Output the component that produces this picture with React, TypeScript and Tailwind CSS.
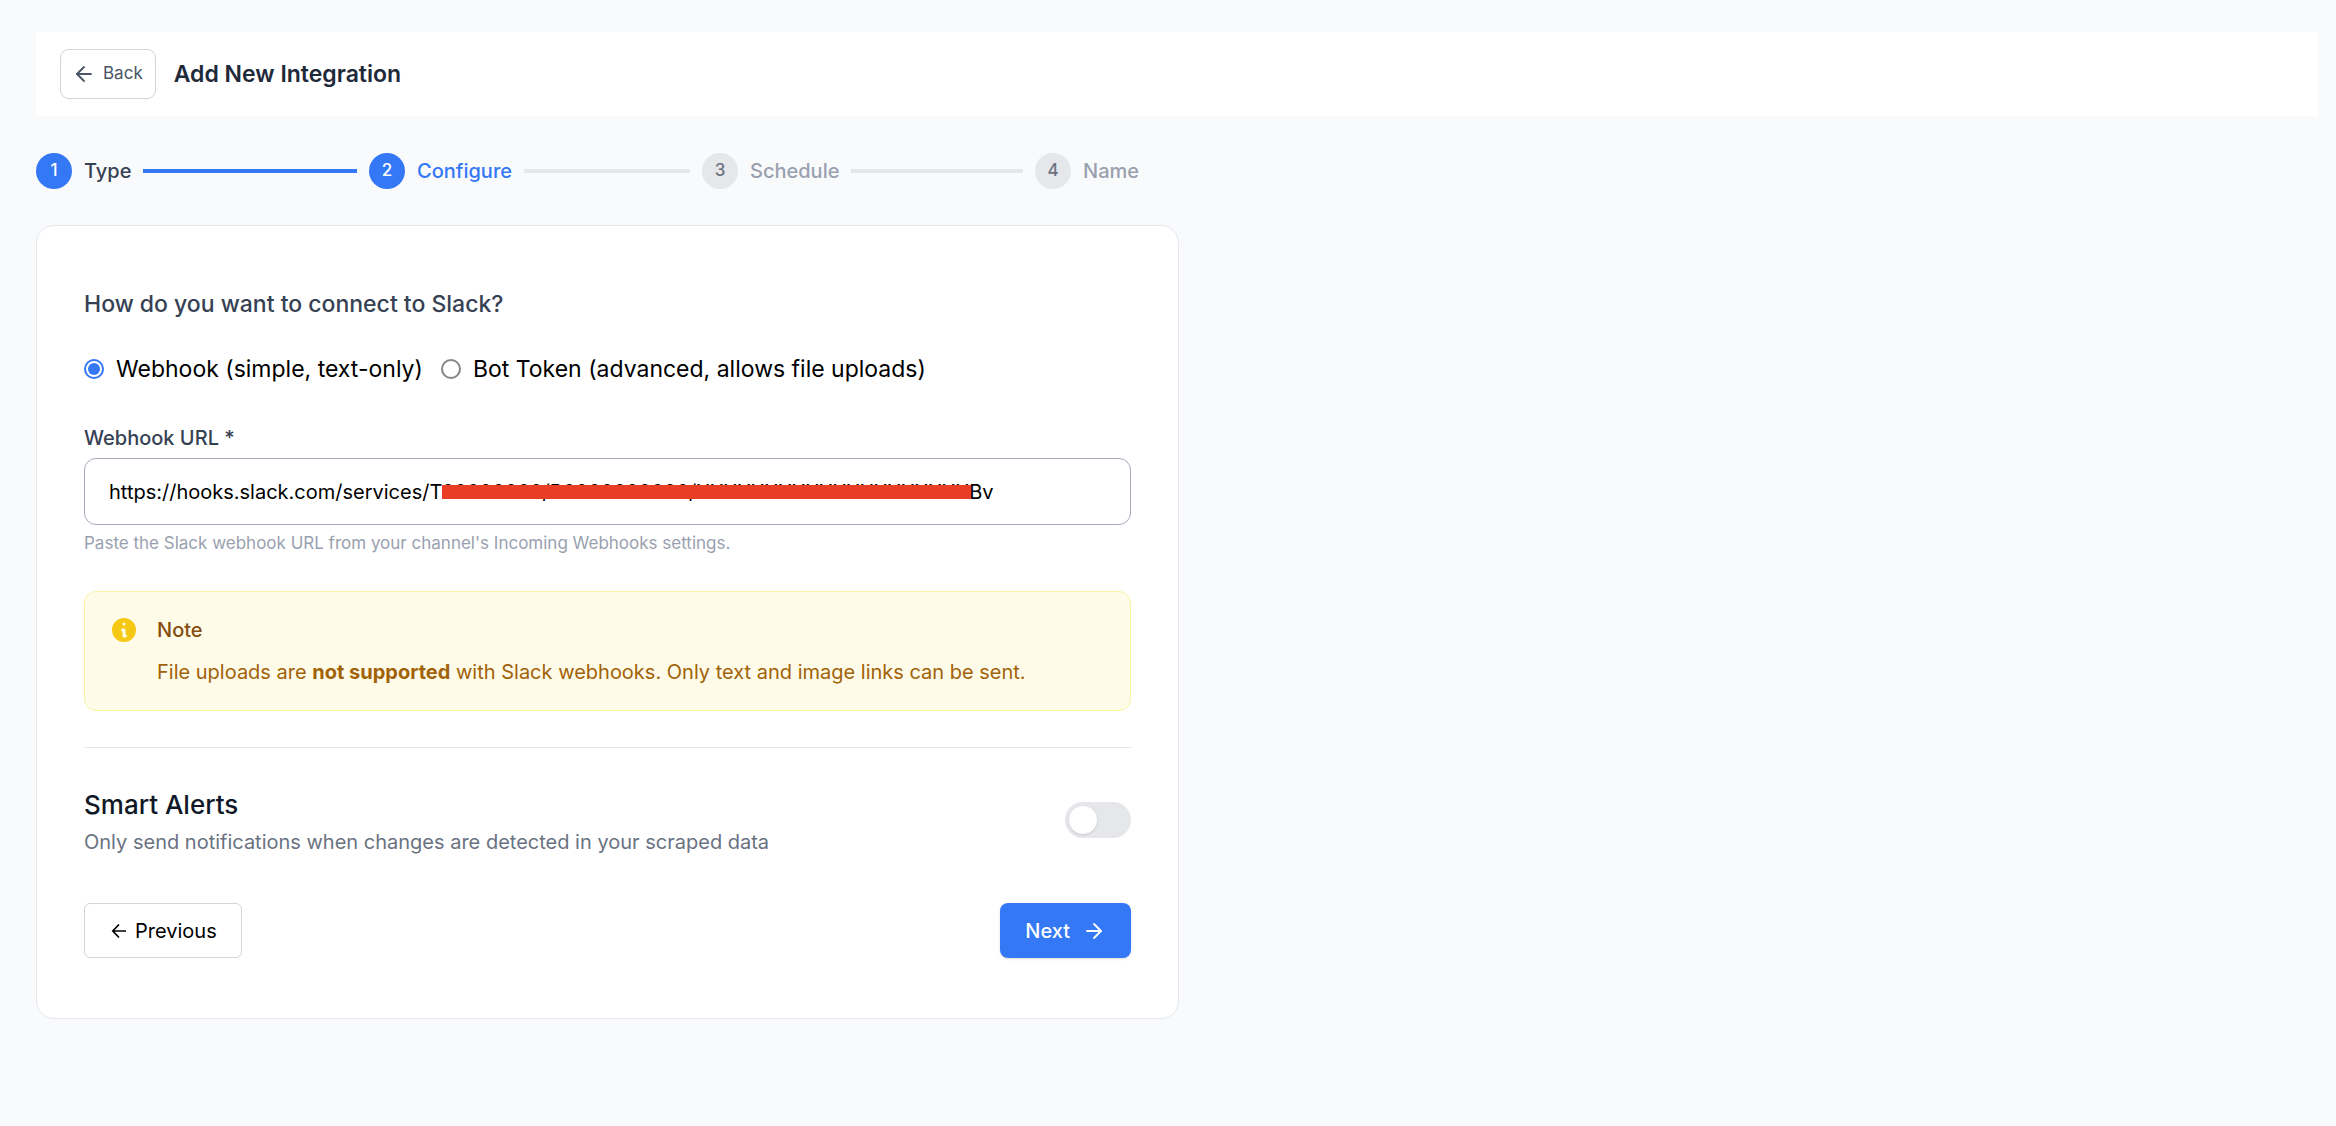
import { useState } from 'react';
import { ArrowLeft, ArrowRight } from 'lucide-react';

type StepState = 'done' | 'current' | 'upcoming';

const steps: { label: string; state: StepState }[] = [
  { label: 'Type', state: 'done' },
  { label: 'Configure', state: 'current' },
  { label: 'Schedule', state: 'upcoming' },
  { label: 'Name', state: 'upcoming' },
];

const labelColor: Record<StepState, string> = {
  done: 'text-gray-700',
  current: 'text-[#3478f6]',
  upcoming: 'text-gray-400',
};

function Stepper() {
  return (
    <ol className="mt-[37px] flex w-full max-w-[1143px] pr-10">
      {steps.map((step, i) => {
        const last = i === steps.length - 1;
        return (
          <li key={step.label} className={`flex items-center gap-3 ${last ? 'flex-none' : 'flex-1 pr-3'}`}>
            <span
              className={`flex size-9 flex-none items-center justify-center rounded-full text-[17px] font-medium ${
                step.state === 'upcoming' ? 'bg-gray-200 text-gray-500' : 'bg-[#3478f6] text-white'
              }`}
            >
              {i + 1}
            </span>
            <span className={`text-[20px] leading-[30px] font-medium ${labelColor[step.state]}`}>{step.label}</span>
            {!last && <span className={`h-1 flex-1 ${step.state === 'done' ? 'bg-[#3478f6]' : 'bg-gray-200'}`} />}
          </li>
        );
      })}
    </ol>
  );
}

function RadioOption(props: { id: string; label: string; checked: boolean; onSelect: () => void }) {
  return (
    <label htmlFor={props.id} className="flex items-center gap-3 text-[23px] leading-9 text-black">
      <input
        id={props.id}
        type="radio"
        name="connection"
        checked={props.checked}
        onChange={props.onSelect}
        className="flex size-5 flex-none appearance-none items-center justify-center rounded-full border-2 border-[#858585] bg-white before:size-3 before:rounded-full checked:border-[#3478f6] checked:before:bg-[#3478f6]"
      />
      {props.label}
    </label>
  );
}

function InfoIcon() {
  return (
    <svg viewBox="0 0 20 20" className="size-[30px] flex-none fill-[#f5c913]" aria-hidden="true">
      <path
        fillRule="evenodd"
        clipRule="evenodd"
        d="M18 10a8 8 0 11-16 0 8 8 0 0116 0zm-7-4a1 1 0 11-2 0 1 1 0 012 0zM9 9a1 1 0 000 2v3a1 1 0 001 1h1a1 1 0 100-2v-3a1 1 0 00-1-1H9z"
      />
    </svg>
  );
}

function SmallArrowLeft() {
  return (
    <svg viewBox="0 0 16 16" className="size-4" fill="none" stroke="currentColor" strokeWidth="1.7" aria-hidden="true">
      <path d="M15 8H2M8 1.5L1.8 8L8 14.5" />
    </svg>
  );
}

export default function App() {
  const [mode, setMode] = useState<'webhook' | 'bot'>('webhook');
  const [url, setUrl] = useState('https://hooks.slack.com/services/T00000000/B0000000000/XXXXXXXXXXXXXXXXXXXXBv');
  const [smart, setSmart] = useState(false);

  return (
    <div className="min-h-screen bg-[#f9fafc] pt-8 pr-[18px] pb-12 pl-9 font-['Inter',sans-serif]">
      <header className="flex items-center gap-[18px] bg-white px-6 py-[17px]">
        <button
          type="button"
          className="flex h-[50px] items-center gap-[7px] rounded-[9px] border border-gray-300 bg-white pr-3 pl-[11px] text-[17px] text-gray-600"
        >
          <ArrowLeft className="size-6" strokeWidth={1.8} />
          Back
        </button>
        <h1 className="text-[23px] leading-8 font-semibold text-gray-800">Add New Integration</h1>
      </header>

      <Stepper />

      <main className="mt-9 w-full max-w-[1143px] rounded-[18px] border border-gray-200 bg-white px-[47px] pt-[62px] pb-[60px]">
        <fieldset>
          <legend className="text-[23px] leading-8 font-medium text-gray-700">How do you want to connect to Slack?</legend>
          <div className="mt-[31px] flex flex-wrap gap-x-[18px]">
            <RadioOption
              id="webhook"
              label="Webhook (simple, text-only)"
              checked={mode === 'webhook'}
              onSelect={() => setMode('webhook')}
            />
            <RadioOption
              id="bot"
              label="Bot Token (advanced, allows file uploads)"
              checked={mode === 'bot'}
              onSelect={() => setMode('bot')}
            />
          </div>
        </fieldset>

        <div className="mt-9">
          <label htmlFor="url" className="block text-[20px] leading-[30px] font-medium text-gray-700">
            Webhook URL *
          </label>
          <div className="relative mt-[5px]">
            <input
              id="url"
              type="text"
              value={url}
              onChange={(e) => setUrl(e.target.value)}
              className="block h-[67px] w-full rounded-xl border border-[#a3abb8] bg-white px-6 text-[20px] text-black"
            />
            <span className="absolute top-[27px] left-[358px] h-[14px] w-[529px] bg-[#e93e25]" aria-hidden="true" />
          </div>
          <p className="mt-[5px] text-[17px] leading-[26px] text-gray-400">
            Paste the Slack webhook URL from your channel's Incoming Webhooks settings.
          </p>
        </div>

        <section className="mt-[35px] flex gap-[18px] rounded-xl border border-[#fcf2a6] bg-[#fefbe8] px-6 py-[23px]">
          <InfoIcon />
          <div className="text-[20px] leading-[30px]">
            <h2 className="font-medium text-[#854d0e]">Note</h2>
            <p className="mt-3 text-[#a16207]">
              File uploads are <strong className="font-bold">not supported</strong> with Slack webhooks. Only text and
              image links can be sent.
            </p>
          </div>
        </section>

        <div className="mt-9 flex items-center justify-between border-t border-gray-200 pt-[35px]">
          <label htmlFor="smart">
            <span className="block text-[26px] leading-[44px] font-medium text-gray-900">Smart Alerts</span>
            <span className="block text-[20px] leading-[30px] text-gray-500">
              Only send notifications when changes are detected in your scraped data
            </span>
          </label>
          <input
            id="smart"
            type="checkbox"
            role="switch"
            checked={smart}
            onChange={(e) => setSmart(e.target.checked)}
            className="flex h-9 w-[66px] flex-none appearance-none items-center rounded-full bg-gray-200 px-1 before:size-7 before:rounded-full before:bg-white before:shadow-sm checked:justify-end checked:bg-[#3478f6]"
          />
        </div>

        <div className="mt-[46px] flex justify-between text-[20px]">
          <button
            type="button"
            className="flex h-[55px] items-center gap-2 rounded-md border border-gray-300 bg-white pr-6 pl-[26px] text-black"
          >
            <SmallArrowLeft />
            Previous
          </button>
          <button
            type="button"
            className="flex h-[55px] items-center gap-3 rounded-lg bg-[#3478f6] px-[25px] font-medium text-white shadow-sm"
          >
            Next
            <ArrowRight className="size-6" strokeWidth={1.8} />
          </button>
        </div>
      </main>
    </div>
  );
}
